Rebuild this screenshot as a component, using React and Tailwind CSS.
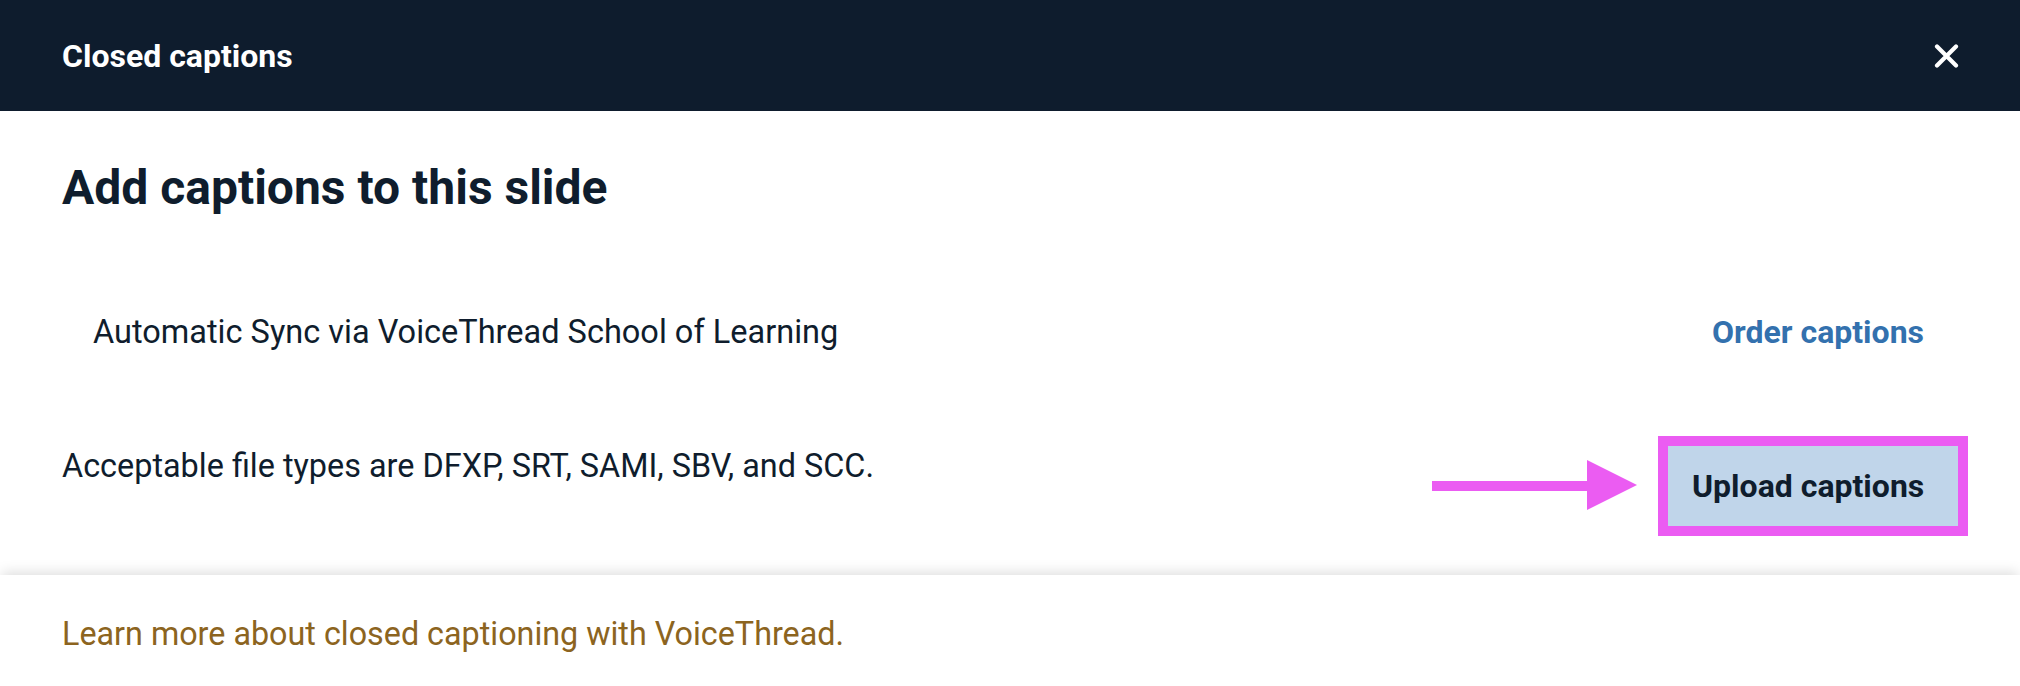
import React from "react";

export default function App() {
  return (
    <div
      className="w-[2020px] h-[686px] bg-white overflow-hidden flex flex-col text-[#0f1d2d]"
      style={{ fontFamily: "Roboto, 'Noto Sans', sans-serif" }}
    >
      <header className="h-[111px] shrink-0 bg-[#0e1c2d] flex items-center justify-between pl-[62px] pr-[61px]">
        <h1 className="text-white text-[32px] font-bold leading-[40px]">Closed captions</h1>
        <button className="w-[25px] h-[24px] flex items-center justify-center text-white" aria-label="Close">
          <svg width="25" height="24" viewBox="0 0 25 24" fill="none">
            <path d="M3 2.5 L22 21.5 M22 2.5 L3 21.5" stroke="white" strokeWidth="4.2" strokeLinecap="round" />
          </svg>
        </button>
      </header>

      <main className="h-[464px] shrink-0 bg-white px-[62px] pt-[49px] flex flex-col">
        <h2 className="text-[48px] font-bold leading-[56px]">Add captions to this slide</h2>

        <div className="mt-[96px] flex items-center justify-between">
          <p className="pl-[31px] text-[32.5px] leading-[40px]">
            Automatic Sync via VoiceThread School of Learning
          </p>
          <a className="pr-[34px] text-[32px] font-bold leading-[40px] text-[#3371ae] cursor-pointer">
            Order captions
          </a>
        </div>

        <div className="mt-[94px] flex items-start justify-between">
          <p className="text-[32.4px] leading-[40px]">
            Acceptable file types are DFXP, SRT, SAMI, SBV, and SCC.
          </p>
          <div className="relative">
            <svg
              className="absolute left-[-236px] top-[14px]"
              width="205"
              height="50"
              viewBox="0 0 205 50"
            >
              <rect x="0" y="21" width="157" height="10" fill="#eb5cf2" />
              <polygon points="155,0 205,25 155,50" fill="#eb5cf2" />
            </svg>
            <button className="w-[290px] h-[80px] bg-[#c0d5ea] outline-[10px] outline-solid outline-[#eb5cf2] flex items-center pl-[24px] text-[32px] font-bold leading-[40px] text-[#0f1d2d]">
              Upload captions
            </button>
          </div>
        </div>
      </main>

      <footer className="relative flex-1 bg-white px-[62px] pt-[39px] shadow-[0_-5px_12px_-2px_rgba(0,0,0,0.13)]">
        <a className="text-[32.3px] leading-[40px] text-[#8c6420] cursor-pointer">
          Learn more about closed captioning with VoiceThread.
        </a>
      </footer>
    </div>
  );
}
